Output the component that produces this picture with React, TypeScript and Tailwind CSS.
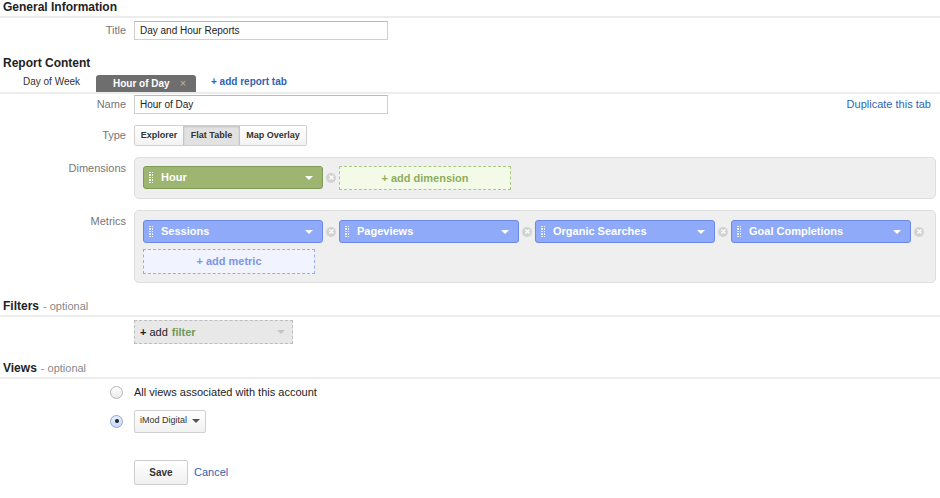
import React from 'react'

const font = { fontFamily: '"Liberation Sans", Arial, sans-serif' }

function SectionHead({ title, optional, line = true }: { title: string; optional?: boolean; line?: boolean }) {
  return (
    <div className={`pl-[3px] h-[18px] flex items-end pb-[3px] ${line ? 'border-b-2 border-[#ececec]' : ''}`}>
      <span className="text-[12px] font-bold text-[#222] leading-none">{title}</span>
      {optional && <span className="text-[11px] text-[#888] leading-none ml-1">- optional</span>}
    </div>
  )
}

function Label({ children, className = '' }: { children: React.ReactNode; className?: string }) {
  return (
    <div className={`w-[126px] shrink-0 text-right text-[11px] text-[#777] ${className}`}>{children}</div>
  )
}

function Grip() {
  return (
    <div className="grid grid-cols-2 gap-x-[1px] gap-y-[1px] ml-[5px] mr-[8px]">
      {Array.from({ length: 10 }).map((_, i) => (
        <span key={i} className="block w-[1.5px] h-[1.5px] bg-white/80" />
      ))}
    </div>
  )
}

function Caret({ color = 'border-t-white' }: { color?: string }) {
  return <span className={`block w-0 h-0 border-l-[4px] border-r-[4px] border-t-[4px] border-l-transparent border-r-transparent ${color}`} />
}

function XCircle() {
  return (
    <span className="w-[10px] h-[10px] rounded-full bg-[#d2d2d2] flex items-center justify-center shrink-0">
      <svg width="5" height="5" viewBox="0 0 5 5">
        <path d="M0.5 0.5L4.5 4.5M4.5 0.5L0.5 4.5" stroke="#fff" strokeWidth="1.2" />
      </svg>
    </span>
  )
}

function Chip({ label, green }: { label: string; green?: boolean }) {
  return (
    <div
      className={`w-[180px] h-[23px] rounded-[3px] border flex items-center pr-[9px] shrink-0 ${
        green ? 'bg-[#9db571] border-[#7f9c57]' : 'bg-[#8faaf8] border-[#6c89e4]'
      }`}
    >
      <Grip />
      <span className="text-[11px] font-bold text-white flex-1">{label}</span>
      <Caret />
    </div>
  )
}

export default function App() {
  const metrics = ['Sessions', 'Pageviews', 'Organic Searches', 'Goal Completions']
  return (
    <div className="w-[940px] h-[498px] bg-white overflow-hidden" style={font}>
      <SectionHead title="General Information" />
      <div className="flex items-center gap-2 mt-[3px]">
        <Label>Title</Label>
        <div className="w-[254px] h-[19px] border border-[#cfcfcf] border-t-[#b9b9b9] px-[5px] flex items-center text-[10px] text-[#222]">
          Day and Hour Reports
        </div>
      </div>

      <div className="mt-[14px]">
        <SectionHead title="Report Content" line={false} />
      </div>
      <div className="border-b-2 border-[#ececec] h-[20px] flex items-end mt-[2px]">
        <span className="ml-[23px] w-[73px] text-[10px] text-[#333] pb-[3px]">Day of Week</span>
        <div className="w-[100px] h-[17px] bg-[#6e6e6e] rounded-t-[3px] flex items-center pl-[17px]">
          <span className="text-[10px] font-bold text-white">Hour of Day</span>
          <span className="ml-[10px] text-[11px] text-[#b5b5b5] leading-none">×</span>
        </div>
        <span className="ml-[15px] text-[10px] font-bold text-[#2f63b5] pb-[3px]">+ add report tab</span>
      </div>

      <div className="flex items-center gap-2 mt-[1px]">
        <Label>Name</Label>
        <div className="w-[254px] h-[19px] border border-[#cfcfcf] border-t-[#b9b9b9] px-[5px] flex items-center text-[10px] text-[#222]">
          Hour of Day
        </div>
        <span className="ml-auto mr-[9px] text-[11px] text-[#2f63b5]">Duplicate this tab</span>
      </div>

      <div className="flex items-center gap-2 mt-[11px]">
        <Label>Type</Label>
        <div className="flex h-[21px] border border-[#d0d0d0] rounded-[2px] text-[9px] font-bold text-[#333]">
          <span className="w-[48px] flex items-center justify-center bg-gradient-to-b from-white to-[#f2f2f2]">Explorer</span>
          <span className="w-[57px] flex items-center justify-center bg-[#e2e2e2] border-x border-[#c6c6c6] shadow-[inset_0_1px_2px_rgba(0,0,0,0.15)]">Flat Table</span>
          <span className="w-[66px] flex items-center justify-center bg-gradient-to-b from-white to-[#f2f2f2]">Map Overlay</span>
        </div>
      </div>

      <div className="flex items-start gap-2 mt-[11px]">
        <Label className="pt-[3px]">Dimensions</Label>
        <div className="w-[802px] h-[42px] bg-[#efefef] border border-[#dedede] rounded-[5px] pl-[8px] pt-[8px] flex items-start gap-[3px]">
          <Chip label="Hour" green />
          <div className="h-[23px] flex items-center"><XCircle /></div>
          <div className="w-[172px] h-[24px] bg-[#f3fbe8] border border-dashed border-[#a9c885] flex items-center justify-center text-[11px] font-bold text-[#8fad62]">
            + add dimension
          </div>
        </div>
      </div>

      <div className="flex items-start gap-2 mt-[11px]">
        <Label className="pt-[3px]">Metrics</Label>
        <div className="w-[802px] h-[73px] bg-[#efefef] border border-[#dedede] rounded-[5px] pl-[8px] pt-[9px]">
          <div className="flex items-center gap-[3px]">
            {metrics.map((m) => (
              <React.Fragment key={m}>
                <Chip label={m} />
                <XCircle />
              </React.Fragment>
            ))}
          </div>
          <div className="w-[172px] h-[25px] mt-[6px] bg-[#f1f4ff] border border-dashed border-[#97abee] flex items-center justify-center text-[11px] font-bold text-[#7f95e6]">
            + add metric
          </div>
        </div>
      </div>

      <div className="mt-[16px]">
        <SectionHead title="Filters" optional />
      </div>
      <div className="flex gap-2 mt-[3px]">
        <div className="w-[126px]" />
        <div className="w-[159px] h-[24px] bg-[#e8e8e8] border border-dashed border-[#bdbdbd] flex items-center pl-[5px] pr-[7px] text-[11px]">
          <span className="font-bold text-[#222]">+</span>
          <span className="ml-[3px] text-[#222]">add</span>
          <span className="ml-[4px] font-bold text-[#6f9a58] flex-1">filter</span>
          <Caret color="border-t-[#c4c4c4]" />
        </div>
      </div>

      <div className="mt-[17px]">
        <SectionHead title="Views" optional />
      </div>
      <div className="flex items-center mt-[5px]">
        <div className="w-[126px] flex justify-end pr-[3px]">
          <span className="w-[13px] h-[13px] rounded-full border border-[#b5b5b5] bg-gradient-to-b from-white to-[#eaeaea]" />
        </div>
        <span className="ml-2 text-[11px] text-[#222]">All views associated with this account</span>
      </div>
      <div className="flex items-center mt-[9px]">
        <div className="w-[126px] flex justify-end pr-[3px]">
          <span className="w-[13px] h-[13px] rounded-full border border-[#8aa6d8] bg-gradient-to-b from-[#e6efff] to-[#c8d9f6] flex items-center justify-center">
            <span className="w-[4px] h-[4px] rounded-full bg-[#222]" />
          </span>
        </div>
        <div className="ml-2 w-[72px] h-[23px] border border-[#d0d0d0] rounded-[2px] bg-gradient-to-b from-white to-[#f1f1f1] flex items-center pl-[5px] pr-[7px] gap-[5px]">
          <span className="text-[9px] text-[#333] whitespace-nowrap flex-1">iMod Digital</span>
          <Caret color="border-t-[#555]" />
        </div>
      </div>

      <div className="flex items-center mt-[27px]">
        <div className="w-[134px]" />
        <div className="w-[54px] h-[25px] border border-[#cdcdcd] rounded-[2px] bg-gradient-to-b from-white to-[#f0f0f0] flex items-center justify-center text-[10px] font-bold text-[#333]">
          Save
        </div>
        <span className="ml-[6px] text-[11px] text-[#2f63b5]">Cancel</span>
      </div>
    </div>
  )
}
